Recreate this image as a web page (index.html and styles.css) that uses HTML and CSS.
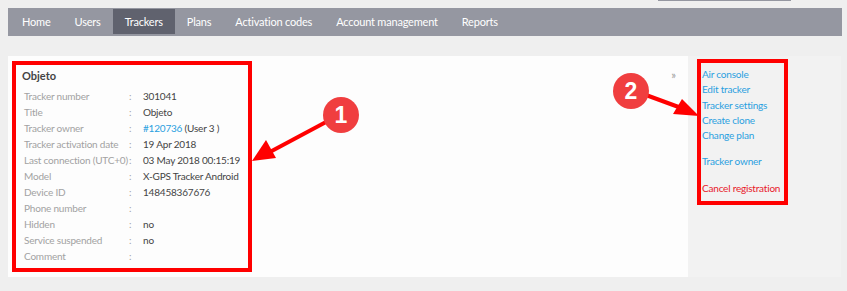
FILE: index.html
```html
<!DOCTYPE html>
<html lang="en">
<head>
    <meta charset="UTF-8">
    <meta name="viewport" content="width=device-width, initial-scale=1.0">
    <title>Trackers - Objeto</title>
    <link rel="stylesheet" href="styles.css">
</head>
<body>
    <div class="top-strip"></div>

    <nav class="main-menu">
        <a href="#">Home</a>
        <a href="#">Users</a>
        <a href="#" class="active">Trackers</a>
        <a href="#">Plans</a>
        <a href="#">Activation codes</a>
        <a href="#">Account management</a>
        <a href="#">Reports</a>
    </nav>

    <div class="page">
        <div class="tracker-panel">
            <div class="tracker-info">
                <h2>Objeto</h2>
                <table class="info-table">
                    <tr><td class="label">Tracker number</td><td class="sep">:</td><td>301041</td></tr>
                    <tr><td class="label">Title</td><td class="sep">:</td><td>Objeto</td></tr>
                    <tr><td class="label">Tracker owner</td><td class="sep">:</td><td><a href="#">#120736</a> (User 3 )</td></tr>
                    <tr><td class="label">Tracker activation date</td><td class="sep">:</td><td>19 Apr 2018</td></tr>
                    <tr><td class="label">Last connection (UTC+0)</td><td class="sep">:</td><td>03 May 2018 00:15:19</td></tr>
                    <tr><td class="label">Model</td><td class="sep">:</td><td>X-GPS Tracker Android</td></tr>
                    <tr><td class="label">Device ID</td><td class="sep">:</td><td>148458367676</td></tr>
                    <tr><td class="label">Phone number</td><td class="sep">:</td><td></td></tr>
                    <tr><td class="label">Hidden</td><td class="sep">:</td><td>no</td></tr>
                    <tr><td class="label">Service suspended</td><td class="sep">:</td><td>no</td></tr>
                    <tr><td class="label">Comment</td><td class="sep">:</td><td></td></tr>
                </table>
            </div>
            <span class="collapse">&raquo;</span>
        </div>

        <div class="actions">
            <div class="action-group">
                <a href="#">Air console</a>
                <a href="#">Edit tracker</a>
                <a href="#">Tracker settings</a>
                <a href="#">Create clone</a>
                <a href="#">Change plan</a>
            </div>
            <div class="action-group">
                <a href="#">Tracker owner</a>
            </div>
            <div class="action-group">
                <a href="#" class="danger">Cancel registration</a>
            </div>
        </div>
    </div>

    <!-- annotation layer drawn over the screenshot -->
    <svg class="annotations" width="847" height="291" viewBox="0 0 847 291">
        <rect x="14" y="63" width="236" height="207" fill="none" stroke="#ff0000" stroke-width="4"/>
        <rect x="699" y="61" width="87" height="142" fill="none" stroke="#ff0000" stroke-width="4"/>

        <line x1="326" y1="122" x2="268" y2="153" stroke="#ff0000" stroke-width="4"/>
        <polygon points="252,161 276,158 266,140" fill="#ff0000"/>

        <line x1="646" y1="95" x2="684" y2="109" stroke="#ff0000" stroke-width="4"/>
        <polygon points="699,116 673,114 682,99" fill="#ff0000"/>

        <circle cx="341" cy="115" r="18" fill="#f03e3f"/>
        <text x="341" y="123" class="badge-num">1</text>
        <circle cx="631" cy="91" r="18" fill="#f03e3f"/>
        <text x="631" y="99" class="badge-num">2</text>
    </svg>
</body>
</html>
```

FILE: styles.css
```css
* {
    margin: 0;
    padding: 0;
    box-sizing: border-box;
}

body {
    font-family: Lato, "Open Sans", sans-serif;
    background-color: #efefef;
    width: 847px;
    height: 291px;
    position: relative;
    overflow: hidden;
}

.top-strip {
    width: 133px;
    height: 1px;
    margin-left: 658px;
    background: #9597a1;
}

.main-menu {
    display: flex;
    height: 28px;
    margin: 7px 5px 0 8px;
    padding: 1px 0 0 2px;
    background: #9597a1;
}

.main-menu a {
    display: block;
    height: 25px;
    line-height: 25px;
    padding: 0 12px;
    color: #fff;
    font-size: 11px;
    letter-spacing: -0.2px;
    text-decoration: none;
}

.main-menu a.active {
    background: #60626e;
}

.page {
    display: flex;
    margin: 20px 6px 0 8px;
    height: 221px;
}

.tracker-panel {
    width: 680px;
    background: #fdfdfd;
    display: flex;
    justify-content: space-between;
    align-items: flex-start;
    padding: 12px 12px 0 14px;
}

.tracker-info h2 {
    font-size: 11px;
    font-weight: bold;
    color: #444;
    line-height: 16px;
    margin-bottom: 4px;
}

.info-table {
    border-collapse: collapse;
    font-size: 10px;
    letter-spacing: -0.2px;
    color: #444;
}

.info-table td {
    height: 16px;
    padding: 0;
    white-space: nowrap;
}

.info-table .label {
    width: 107px;
    padding-left: 2px;
    color: #a2a2a2;
}

.info-table .sep {
    width: 14px;
    color: #a2a2a2;
}

.info-table a {
    color: #2a9fe0;
    text-decoration: none;
}

.collapse {
    font-size: 11px;
    color: #999;
    line-height: 12px;
    margin-top: 1px;
}

.actions {
    flex: 1;
    background: #f2f2f2;
    padding: 11px 0 0 14px;
}

.action-group {
    display: flex;
    flex-direction: column;
    margin-bottom: 11px;
}

.action-group a {
    font-size: 10px;
    letter-spacing: -0.2px;
    line-height: 15.3px;
    color: #2a9fe0;
    text-decoration: none;
}

.action-group a.danger {
    color: #e8202a;
}

.annotations {
    position: absolute;
    top: 0;
    left: 0;
    pointer-events: none;
}

.badge-num {
    font-family: "Liberation Sans", Arial, sans-serif;
    font-size: 23px;
    font-weight: bold;
    fill: #fff;
    text-anchor: middle;
}
```
